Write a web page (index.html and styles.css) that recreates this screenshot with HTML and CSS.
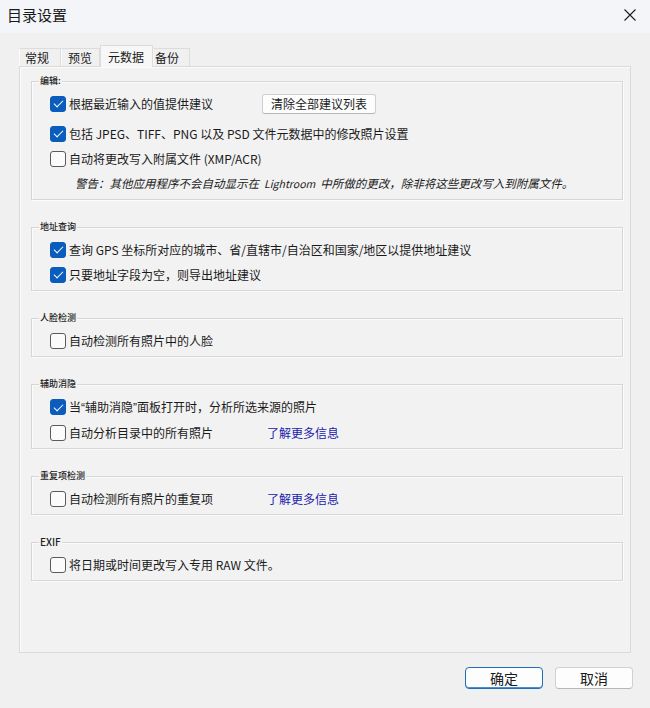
FILE: index.html
```html
<!DOCTYPE html>
<html lang="zh-CN">
<head>
    <meta charset="UTF-8">
    <meta name="viewport" content="width=device-width, initial-scale=1.0">
    <title>目录设置</title>
    <link rel="stylesheet" href="styles.css">
</head>
<body>
    <div class="window">
        <div class="titlebar">
            <span class="title">目录设置</span>
            <button class="close" aria-label="关闭">
                <svg width="12" height="12" viewBox="0 0 12 12"><path d="M0.5 0.5 L11.5 11.5 M11.5 0.5 L0.5 11.5" stroke="#1b1b1b" stroke-width="1.1" fill="none"/></svg>
            </button>
        </div>

        <div class="main">
            <div class="tabs">
                <div class="tab">常规</div>
                <div class="tab">预览</div>
                <div class="tab active">元数据</div>
                <div class="tab">备份</div>
            </div>

            <div class="panel">
                <div class="group first">
                    <span class="legend">编辑:</span>
                    <div class="row split gap">
                        <label class="opt"><input type="checkbox" checked><span>根据最近输入的值提供建议</span></label>
                        <button class="small-btn">清除全部建议列表</button>
                    </div>
                    <div class="row">
                        <label class="opt"><input type="checkbox" checked><span>包括 JPEG、TIFF、PNG 以及 PSD 文件元数据中的修改照片设置</span></label>
                    </div>
                    <div class="row">
                        <label class="opt"><input type="checkbox"><span>自动将更改写入附属文件 (XMP/ACR)</span></label>
                    </div>
                    <div class="row warn">警告：其他应用程序不会自动显示在<span class="brand">Lightroom</span>中所做的更改，除非将这些更改写入到附属文件。</div>
                </div>

                <div class="group">
                    <span class="legend">地址查询</span>
                    <div class="row">
                        <label class="opt"><input type="checkbox" checked><span>查询 GPS 坐标所对应的城市、省/直辖市/自治区和国家/地区以提供地址建议</span></label>
                    </div>
                    <div class="row">
                        <label class="opt"><input type="checkbox" checked><span>只要地址字段为空，则导出地址建议</span></label>
                    </div>
                </div>

                <div class="group">
                    <span class="legend">人脸检测</span>
                    <div class="row">
                        <label class="opt"><input type="checkbox"><span>自动检测所有照片中的人脸</span></label>
                    </div>
                </div>

                <div class="group">
                    <span class="legend">辅助消隐</span>
                    <div class="row tall">
                        <label class="opt"><input type="checkbox" checked><span>当<span class="latin">“</span>辅助消隐<span class="latin">”</span>面板打开时，分析所选来源的照片</span></label>
                    </div>
                    <div class="row split">
                        <label class="opt"><input type="checkbox"><span>自动分析目录中的所有照片</span></label>
                        <a class="link" href="#">了解更多信息</a>
                    </div>
                </div>

                <div class="group">
                    <span class="legend">重复项检测</span>
                    <div class="row split">
                        <label class="opt"><input type="checkbox"><span>自动检测所有照片的重复项</span></label>
                        <a class="link" href="#">了解更多信息</a>
                    </div>
                </div>

                <div class="group">
                    <span class="legend exif">EXIF</span>
                    <div class="row">
                        <label class="opt"><input type="checkbox"><span>将日期或时间更改写入专用 RAW 文件。</span></label>
                    </div>
                </div>
            </div>
        </div>

        <div class="footer">
            <button class="btn primary">确定</button>
            <button class="btn">取消</button>
        </div>
    </div>
</body>
</html>
```

FILE: styles.css
```css
* {
    box-sizing: border-box;
}
body {
    margin: 0;
    background-color: #f0f0f0;
    color: #1a1a1a;
    font-family: "Noto Sans CJK SC", "Noto Sans", sans-serif;
    font-size: 12px;
}
.latin {
    font-family: "Liberation Sans", sans-serif;
}
.window {
    width: 650px;
    height: 708px;
    display: flex;
    flex-direction: column;
}
.titlebar {
    height: 33px;
    background-color: #f4f5f8;
    display: flex;
    align-items: flex-start;
    justify-content: space-between;
}
.title {
    font-size: 15px;
    line-height: 30px;
    padding-left: 7px;
}
.close {
    border: none;
    background: none;
    padding: 0;
    width: 12px;
    height: 12px;
    margin: 9px 14px 0 0;
    display: flex;
}
.main {
    padding: 12px 19px 0 19px;
}
.tabs {
    display: flex;
    align-items: flex-end;
    height: 21px;
}
.tab {
    height: 18px;
    line-height: 17px;
    border: 1px solid #dcdcdc;
    border-bottom: none;
    border-left-color: #fafafa;
    background-color: #f0f0f0;
    white-space: nowrap;
}
.tab:nth-child(1) {
    width: 42px;
    padding-left: 5px;
}
.tab:nth-child(2) {
    width: 39px;
    padding-left: 6px;
}
.tab:nth-child(4) {
    width: 37px;
    padding-left: 1px;
}
.tab.active {
    width: 53px;
    height: 22px;
    line-height: 21px;
    padding-left: 7px;
    margin-bottom: -1px;
    background-color: #f7f7f7;
    border-color: #dcdcdc;
    position: relative;
    z-index: 1;
}
.panel {
    height: 587px;
    width: 612px;
    border: 1px solid #dadada;
    box-shadow: inset 1px 1px 0 #fbfbfb;
    background-color: #f2f2f2;
    padding: 14px 7px 0 11px;
}
.group {
    position: relative;
    border: 1px solid #d6d6d6;
    box-shadow: inset 1px 1px 0 #fbfbfb, 1px 1px 0 #fbfbfb;
    padding: 9px 0 3px 18px;
    margin-top: 27px;
}
.group.first {
    margin-top: 0;
}
.legend {
    position: absolute;
    top: -6px;
    left: 7px;
    font-size: 9px;
    line-height: 10px;
    padding: 0 1px;
    background-color: #f2f2f2;
    color: #222;
    font-weight: 500;
}
.legend.exif {
    font-size: 10px;
    top: -7px;
    line-height: 12px;
}
.row {
    height: 25px;
    line-height: 25px;
    display: flex;
    align-items: center;
}
.row.gap {
    margin-bottom: 5px;
}
.row.tall {
    height: 26px;
}
.opt {
    display: flex;
    align-items: center;
    white-space: nowrap;
}
.split .opt {
    width: 212px;
}
.opt input {
    appearance: none;
    -webkit-appearance: none;
    width: 16px;
    height: 16px;
    margin: 0 3px 0 0;
    border: 1px solid #5b5b5b;
    border-radius: 3px;
    background-color: #fbfbfb;
    position: relative;
    flex-shrink: 0;
}
.opt input:checked {
    background-color: #0b5dbd;
    border-color: #0b5dbd;
}
.opt input:checked::after {
    content: "";
    position: absolute;
    left: 4.5px;
    top: 1.5px;
    width: 4px;
    height: 8px;
    border-right: 1.3px solid #fff;
    border-bottom: 1.3px solid #fff;
    transform: rotate(45deg);
}
.warn {
    padding-left: 25px;
    font-style: italic;
    font-size: 11.5px;
    white-space: nowrap;
}
.warn .brand {
    font-size: 10.5px;
    margin: 0 5px;
}
.small-btn {
    font-family: inherit;
    font-size: 12px;
    width: 114px;
    height: 20px;
    padding: 0;
    line-height: 18px;
    background-color: #fdfdfd;
    border: 1px solid #cfcfcf;
    border-bottom-color: #b5b5b5;
    border-radius: 3px;
    color: #1a1a1a;
}
.link {
    margin-left: 5px;
    color: #2020ad;
    text-decoration: none;
    font-size: 12px;
}
.footer {
    display: flex;
    justify-content: flex-end;
    gap: 12px;
    padding: 14px 17px 0 0;
}
.btn {
    font-family: inherit;
    font-size: 14px;
    width: 78px;
    height: 22px;
    padding: 0;
    line-height: 20px;
    background-color: #fdfdfd;
    border: 1px solid #d0d0d0;
    border-bottom-color: #b8b8b8;
    border-radius: 4px;
    color: #1a1a1a;
}
.btn.primary {
    border: 1px solid #1f6fb8;
    box-shadow: inset 0 -1px 0 #4a8fd0;
}
```
